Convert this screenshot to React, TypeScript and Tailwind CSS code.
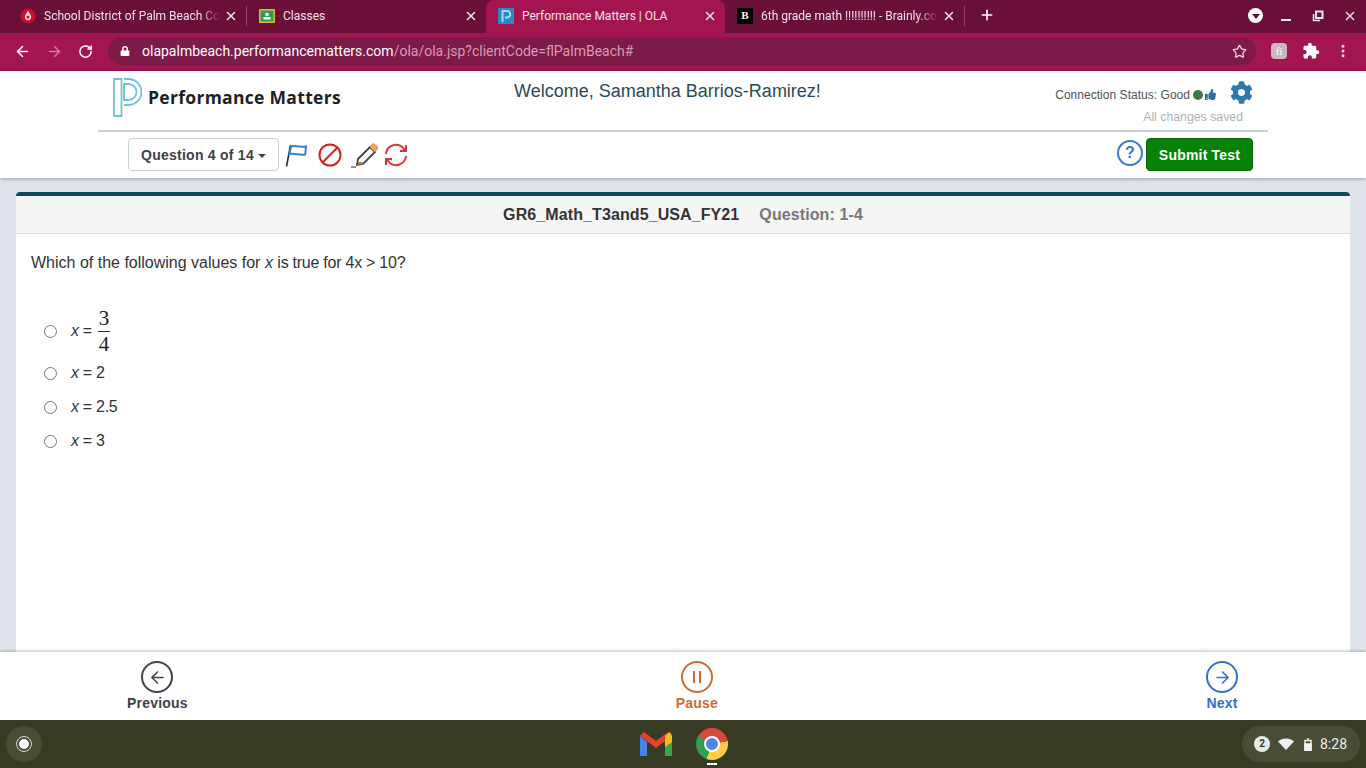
import { ArrowLeft, ArrowRight, RotateCw, Star, X, Plus, EllipsisVertical } from "lucide-react"
import { FaCog, FaThumbsUp, FaLock } from "react-icons/fa"
import { MdExtension } from "react-icons/md"

const sans = "font-['Liberation_Sans',Arial,sans-serif]"

function Favicon({ kind }: { kind: string }) {
  if (kind === "district") {
    return (
      <svg width="16" height="16" viewBox="0 0 16 16">
        <circle cx="8" cy="8" r="7.500" fill="#c8102e" />
        <path d="M8 2.500 10.800 7.500a3.200 3.200 0 1 1-5.600 0Z" fill="#f6d9dc" />
        <circle cx="8" cy="9" r="1.500" fill="#c8102e" />
      </svg>
    )
  }
  if (kind === "classes") {
    return (
      <svg width="16" height="16" viewBox="0 0 16 16">
        <rect x="0" y="1" width="16" height="14" rx="1" fill="#f0b429" />
        <rect x="1.500" y="2.500" width="13" height="11" fill="#2e9e5b" />
        <circle cx="8" cy="6.500" r="1.800" fill="#fff" />
        <rect x="4.500" y="9" width="7" height="2.500" fill="#fff" />
      </svg>
    )
  }
  if (kind === "pm") {
    return (
      <svg width="16" height="16" viewBox="0 0 16 16">
        <rect width="16" height="16" fill="#2a87c8" />
        <path d="M4.500 14V3H9a3 3 0 0 1 0 6.500H7" fill="none" stroke="#a9dcf2" strokeWidth="2" />
      </svg>
    )
  }
  return (
    <div className="w-4 h-4 bg-black flex items-center justify-center text-white text-[11px] font-bold font-['Liberation_Serif',serif] leading-none">
      B
    </div>
  )
}

function Tab({ title, icon, width, active, fade }: { title: string; icon: string; width: string; active?: boolean; fade?: boolean }) {
  return (
    <div className={`relative flex items-center h-[33px] pb-[2px] pl-3 pr-2 ${width} ${active ? "bg-[#a3154f] rounded-t-lg" : ""}`}>
      <div className="shrink-0 w-4 h-4">
        <Favicon kind={icon} />
      </div>
      <div className={`ml-2 mr-1 flex-1 overflow-hidden whitespace-nowrap text-xs text-[#f3e3ea] font-['Roboto',sans-serif] ${fade ? "[mask-image:linear-gradient(to_left,transparent_0,black_20px)]" : ""}`}>{title}</div>
      <X className="shrink-0 text-[#f5e6ec]" size={14} strokeWidth={2.5} />
    </div>
  )
}

function ChromeBar() {
  return (
    <>
      <div className="h-[33px] bg-[#6a0f37] flex items-start pl-[8px]">
        <Tab title="School District of Palm Beach County" icon="district" width="w-[238px]" fade />
        <div className="w-px h-5 bg-[#8f4a69] mt-[6px]" />
        <Tab title="Classes" icon="classes" width="w-[239px]" />
        <Tab title="Performance Matters | OLA" icon="pm" width="w-[239px]" active />
        <Tab title="6th grade math !!!!!!!!!! - Brainly.com" icon="brainly" width="w-[239px]" fade />
        <div className="w-px h-5 bg-[#8f4a69] mt-[6px]" />
        <Plus className="text-white mt-[7px] ml-[14px]" size={16} strokeWidth={2.5} />
        <div className="ml-auto flex items-center h-[31px] pr-[9px]">
          <div className="w-[15px] h-[15px] rounded-full bg-white flex items-center justify-center">
            <span className="mt-[2px] w-0 h-0 border-x-[4px] border-x-transparent border-t-[5px] border-t-[#6a0f37]" />
          </div>
          <div className="ml-[18px] mt-[9px] w-[10px] h-[2px] bg-[#f4e5eb]" />
          <svg className="ml-[21px]" width="12" height="12" viewBox="0 0 12 12" fill="none" stroke="#f4e5eb" strokeWidth="2">
            <path d="M4 1.500h6.500v6.500H4Z" />
            <path d="M1.500 4v6.500H8" strokeWidth="1.500" />
          </svg>
          <X className="ml-[19px] text-[#f4e5eb]" size={14} strokeWidth={2.5} />
        </div>
      </div>
      <div className="h-[38px] bg-[#a3154f] flex items-start pt-1">
        <ArrowLeft className="ml-[14px] mt-[6px] text-white" size={17} strokeWidth={2.2} />
        <ArrowRight className="ml-[15px] mt-[6px] text-[#cf7a9d]" size={17} strokeWidth={2.2} />
        <RotateCw className="ml-[15px] mt-[7px] text-white" size={15} strokeWidth={2.4} />
        <div className="ml-[15px] w-[1148px] h-7 rounded-full bg-[#7e1a48] flex items-center pl-[12px] pr-[9px] font-['Roboto',sans-serif] text-sm">
          <FaLock className="text-white" size={10} />
          <span className="ml-[12px] text-white">olapalmbeach.performancematters.com</span>
          <span className="text-[#d79ab4]">/ola/ola.jsp?clientCode=flPalmBeach#</span>
          <Star className="ml-auto text-[#efdbe4]" size={15} strokeWidth={2} />
        </div>
        <div className="ml-[15px] mt-[6px] w-4 h-4 rounded-sm bg-[#c9b9bf] flex items-center justify-center text-white text-[11px] font-['Liberation_Serif',serif] leading-none">
          fi
        </div>
        <MdExtension className="ml-[15px] mt-[5px] text-white" size={18} />
        <EllipsisVertical className="ml-[15px] mt-[6px] text-[#f0dfe6]" size={16} strokeWidth={2.5} />
      </div>
    </>
  )
}

function Logo() {
  return (
    <svg width="29" height="39" viewBox="0 0 29 39" fill="none" stroke="#6cc4d8" strokeWidth="1.800">
      <path d="M1 1h7.500v37H1Z" />
      <path d="M11 1h4.500a13 13 0 0 1 0 26H11" />
      <path d="M11 6h4.500a8 8 0 0 1 0 16H11Z" />
    </svg>
  )
}

function TestHeader() {
  return (
    <div className={`bg-white shadow-[0_1px_4px_rgba(0,0,0,0.3)] relative h-[107px] ${sans}`}>
      <div className="mx-[98px] h-[61px] border-b-2 border-[#c7d3df] flex">
        <div className="pl-[15px] pt-[7px] flex items-start w-[416px]">
          <Logo />
          <span className="ml-[6px] mt-[9px] text-[17.500px] leading-5 font-bold text-[#1d1f22] tracking-[0.3px] font-['Open_Sans',sans-serif]">Performance Matters</span>
        </div>
        <div className="w-[307px] text-center pt-[10px] text-[18px] leading-5 text-[#2c4a55] whitespace-nowrap">Welcome, Samantha Barrios-Ramirez!</div>
        <div className="ml-auto mr-[25px] w-[200px] flex flex-col items-end">
          <div className="flex items-center h-[37px] pt-[10px] -mr-[10px] whitespace-nowrap">
            <span className="text-xs tracking-[0.03px] text-[#4d5358]">Connection Status: Good</span>
            <span className="ml-[3px] w-[10px] h-[10px] rounded-full bg-[#3c7a48]" />
            <FaThumbsUp className="ml-[2px] text-[#2f6f9a]" size={11} />
            <FaCog className="ml-[14px] mb-[5px] text-[#2f78ad]" size={23} />
          </div>
          <div className="text-[12.300px] text-[#b0b3b6]">All changes saved</div>
        </div>
      </div>
      <div className="flex items-center h-[45px] pl-[128px] pr-[113px]">
        <button className="h-[33px] w-[151px] rounded border border-[#cfcfcf] bg-white text-[#3d4246] text-sm tracking-[0.25px] font-bold flex items-center justify-center">
          Question 4 of 14
          <span className="ml-1 mt-[2px] w-0 h-0 border-x-4 border-x-transparent border-t-4 border-t-[#3d4246]" />
        </button>
        <svg className="ml-[6px]" width="24" height="26" viewBox="0 0 24 26" fill="none">
          <path d="M1.500 24.500 5.500 3" stroke="#2b3238" strokeWidth="1.600" />
          <path d="M6 4.500c4-1.500 6 1 15 0l-.8 8c-6 1.200-9-1.500-15.700-.5Z" stroke="#3a80d0" strokeWidth="2" />
        </svg>
        <svg className="ml-[9px]" width="24" height="24" viewBox="0 0 24 24" fill="none" stroke="#d02027" strokeWidth="2">
          <circle cx="12" cy="12" r="10.500" />
          <path d="M5 19 19 5" />
        </svg>
        <svg className="ml-[8px]" width="28" height="26" viewBox="0 0 28 26" fill="none">
          <path d="M8 17 20 5l5 5-12 12-6 1Z" fill="#fff" stroke="#3b4046" strokeWidth="1.800" />
          <path d="M20 5l2-2.500c1-.8 2-.8 3 0l2 2c.7 1 .7 2 0 3L25 10Z" fill="#eda65c" stroke="#d9863a" />
          <path d="M10 20 13 22 7 23Z" fill="#e2984f" stroke="#8a5c30" />
          <path d="M1 25h5" stroke="#6b6f73" strokeWidth="1.500" />
        </svg>
        <svg className="ml-[5px]" width="26" height="26" viewBox="0 0 26 26" fill="none" stroke="#d8343c" strokeWidth="2">
          <path d="M3 12a10 10 0 0 1 18-5l2 2" />
          <path d="M23 3v6h-6" />
          <path d="M23 14a10 10 0 0 1-18 5l-2-2" />
          <path d="M3 23v-6h6" />
        </svg>
        <div className="ml-auto mb-[4px] w-[26px] h-[26px] rounded-full border-2 border-[#3a78d6] flex items-center justify-center text-[#3a78d6] font-bold text-base">?</div>
        <button className="ml-[3px] w-[107px] h-[33px] rounded bg-[#068306] border border-[#0a6d0a] text-white font-bold text-sm tracking-[0.2px]">Submit Test</button>
      </div>
    </div>
  )
}

function Radio() {
  return <span className="ml-[13px] w-[13px] h-[13px] rounded-full border border-[#767676] bg-white" />
}

function Choice({ value }: { value: string }) {
  return (
    <div className="flex items-center h-[34px]">
      <Radio />
      <span className="ml-[14px] text-[#333]"><i>x</i> = {value}</span>
    </div>
  )
}

function QuestionCard() {
  return (
    <div className={`flex-1 min-h-0 px-4 pt-[14px] ${sans}`}>
      <div className="h-full bg-white rounded-t border-t-4 border-[#0d4a5e]">
        <div className="h-[38px] bg-[#f5f5f5] border-b border-[#dddddd] flex items-center justify-center text-base tracking-[0.1px] font-bold">
          <span className="text-[#333]">GR6_Math_T3and5_USA_FY21</span>
          <span className="ml-5 text-[#777]">Question: 1-4</span>
        </div>
        <div className="px-[15px] pt-[18px] text-base leading-[22px] text-[#333]">
          Which of the following values for <i>x</i> <span className="tracking-[-0.25px]">is true for 4x &gt; 10?</span>
        </div>
        <div className="ml-[15px] mt-[32px] text-base tracking-[-0.3px]">
          <div className="flex items-center h-[50px]">
            <Radio />
            <span className="ml-[14px] text-[#333]"><i>x</i> =</span>
            <div className="ml-[6px] flex flex-col items-center font-['Liberation_Serif',serif] text-[21px] leading-[25px] text-[#222]">
              <span>3</span>
              <span className="w-[12px] h-px bg-[#333]" />
              <span>4</span>
            </div>
          </div>
          <Choice value="2" />
          <Choice value="2.5" />
          <Choice value="3" />
        </div>
      </div>
    </div>
  )
}

function NavButton({ label, color, children }: { label: string; color: string; children: React.ReactNode }) {
  return (
    <div className={`flex flex-col items-center ${color}`}>
      <div className="w-8 h-8 rounded-full border-2 border-current flex items-center justify-center">{children}</div>
      <span className="mt-[1px] text-sm leading-[18px] font-bold tracking-[0.2px]">{label}</span>
    </div>
  )
}

function Footer() {
  return (
    <div className={`relative h-[68px] bg-white shadow-[0_-1px_3px_rgba(0,0,0,0.25)] pt-[9px] flex justify-between pl-[127px] pr-[128px] ${sans}`}>
      <NavButton label="Previous" color="text-[#3c4248]">
        <ArrowLeft size={19} strokeWidth={2} />
      </NavButton>
      <NavButton label="Pause" color="text-[#cf6a30]">
        <svg width="10" height="14" viewBox="0 0 10 14" fill="none" stroke="currentColor" strokeWidth="2">
          <path d="M2 1v12M8 1v12" />
        </svg>
      </NavButton>
      <NavButton label="Next" color="text-[#2f6fd0]">
        <ArrowRight size={19} strokeWidth={2} />
      </NavButton>
    </div>
  )
}

function Shelf() {
  return (
    <div className="relative h-[48px] bg-[#383a24] flex items-center justify-between pr-[6px] font-['Roboto',sans-serif]">
      <div className="ml-[6px] w-9 h-9 rounded-full bg-[#4a4c38] flex items-center justify-center">
        <div className="w-4 h-4 rounded-full border border-[#d8d8d0] flex items-center justify-center">
          <div className="w-[10px] h-[10px] rounded-full bg-white" />
        </div>
      </div>
      <div className="absolute left-[639px] top-[8px] flex items-center gap-[23px]">
        <svg width="34" height="28" viewBox="0 0 34 28">
          <path d="M1 6v20h7V12Z" fill="#4a84e8" />
          <path d="M26 12v14h7V6Z" fill="#34a853" />
          <path d="M1 6l16 12L33 6l-4-4-12 9L5 2Z" fill="#e2402f" />
          <path d="M26 6l5-4 2 4v6l-7 5Z" fill="#f8bd14" />
        </svg>
        <div className="relative w-8 h-8 rounded-full bg-[conic-gradient(#d94a3c_0deg_80deg,#ffce43_80deg_200deg,#2f9e4f_200deg_300deg,#d94a3c_300deg_360deg)] flex items-center justify-center">
          <div className="w-[16px] h-[16px] rounded-full bg-[#4b86ec] border-2 border-white" />
          <div className="absolute left-[11px] top-[35px] w-[10px] h-[2px] bg-white" />
        </div>
      </div>
      <div className="w-[118px] h-[36px] rounded-full bg-[#4a4d36] flex items-center pl-3 text-[#ececec] text-sm">
        <span className="w-4 h-4 rounded-full bg-[#e8e8e8] text-[#3a3a2c] text-[10px] font-bold flex items-center justify-center">2</span>
        <svg className="ml-2" width="16" height="12" viewBox="0 0 16 12">
          <path d="M0 3.500C4-.5 12-.5 16 3.500L8 12Z" fill="#f0f0f0" />
        </svg>
        <svg className="ml-[10px]" width="8" height="13" viewBox="0 0 8 13" fill="none" stroke="#f0f0f0" strokeWidth="1.500">
          <path d="M1 2.500h6v9.800H1Z" />
          <path d="M1 6h6v6H1ZM3 1h2" fill="#f0f0f0" />
        </svg>
        <span className="ml-2">8:28</span>
      </div>
    </div>
  )
}

export default function App() {
  return (
    <div className="h-[768px] overflow-hidden flex flex-col bg-[#e0e5eb]">
      <ChromeBar />
      <TestHeader />
      <QuestionCard />
      <Footer />
      <Shelf />
    </div>
  )
}
